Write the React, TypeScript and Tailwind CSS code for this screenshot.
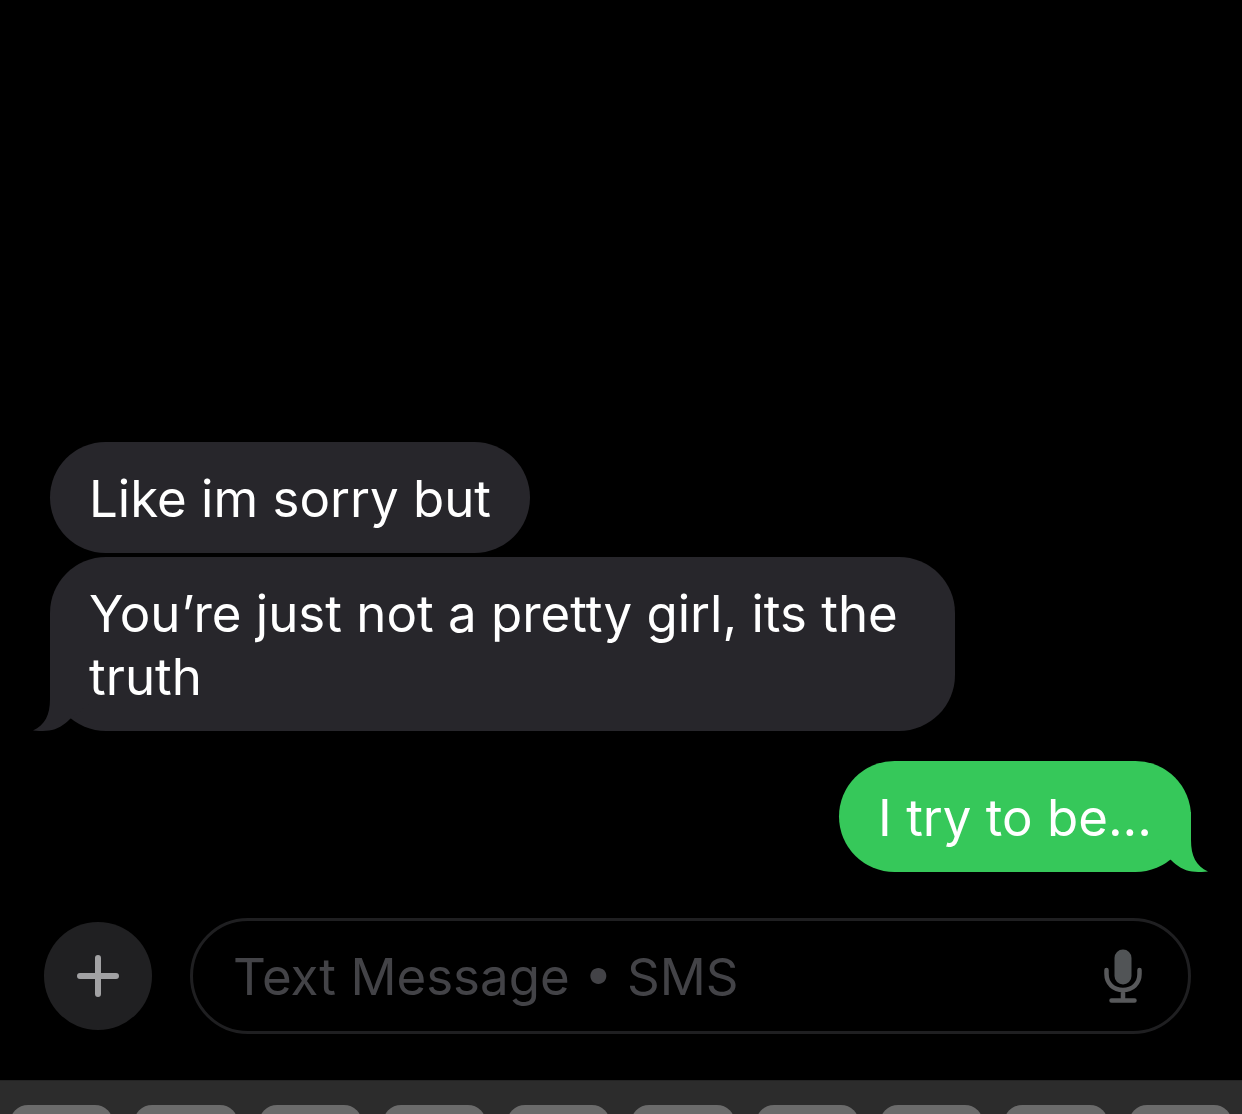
import { useState } from 'react'
import clsx from 'clsx'

interface Message {
  id: number
  text: string
  sent: boolean
  tail: boolean
}

const messages: Message[] = [
  { id: 1, text: 'Like im sorry but', sent: false, tail: false },
  { id: 2, text: 'You’re just not a pretty girl, its the truth', sent: false, tail: true },
  { id: 3, text: 'I try to be...', sent: true, tail: true },
]

const topRow = ['Q', 'W', 'E', 'R', 'T', 'Y', 'U', 'I', 'O', 'P']

function Tail({ sent }: { sent: boolean }) {
  return (
    <svg
      viewBox="0 0 60 60"
      aria-hidden="true"
      className={clsx(
        'absolute bottom-0 size-[60px]',
        sent ? '-right-[17px] -scale-x-100 fill-[#36c85a]' : '-left-[17px] fill-[#27262b]'
      )}
    >
      <path d="M17 0V28C17 44 12 54 0 59.5C5 60.2 11 60.2 16 59.5C24 58.5 31 54 37 48L60 30V0Z" />
    </svg>
  )
}

function Bubble({ message }: { message: Message }) {
  return (
    <li
      className={clsx(
        'relative max-w-[min(905px,80%)] rounded-[56px] px-[39px] pt-[25px] pb-[23px] text-white',
        message.sent ? 'mt-[26px] self-end bg-[#36c85a]' : 'self-start bg-[#27262b]'
      )}
    >
      {message.tail && <Tail sent={message.sent} />}
      <p className="relative">{message.text}</p>
    </li>
  )
}

function MicIcon() {
  return (
    <svg viewBox="0 0 38 54" aria-hidden="true" className="h-[54px] w-[38px]">
      <rect x="10.5" y="0.5" width="17" height="35" rx="8.5" fill="#515456" />
      <path
        d="M2.5 21V25C2.5 34.5 9.5 41 19 41S35.5 34.5 35.5 25V21M19 41V51M7.5 51.500H30.500"
        fill="none"
        stroke="#58595b"
        strokeWidth="4.5"
        strokeLinecap="round"
      />
    </svg>
  )
}

function Composer() {
  const [draft, setDraft] = useState('')

  return (
    <form
      className="flex items-center gap-[38px] py-[46px] pr-[51px] pl-11"
      onSubmit={(e) => e.preventDefault()}
    >
      <button
        type="button"
        aria-label="Add attachment"
        className="flex size-[108px] shrink-0 items-center justify-center rounded-full bg-[#202022]"
      >
        <svg viewBox="0 0 42 42" aria-hidden="true" className="size-[42px]">
          <path d="M21 3V39M3 21H39" stroke="#a2a2a4" strokeWidth="6" strokeLinecap="round" />
        </svg>
      </button>
      <div className="flex h-[116px] min-w-0 flex-1 items-center rounded-full border-3 border-[#1f1f21] pr-[46px] pl-10">
        <input
          type="text"
          aria-label="Text Message"
          placeholder="Text Message • SMS"
          value={draft}
          onChange={(e) => setDraft(e.target.value)}
          className="min-w-0 flex-1 bg-transparent text-white outline-none placeholder:text-[#434347]"
        />
        <button type="button" aria-label="Dictate" className="shrink-0">
          <MicIcon />
        </button>
      </div>
    </form>
  )
}

export default function App() {
  return (
    <div className="flex min-h-screen flex-col bg-black font-['Inter',sans-serif] text-[51px] leading-[63px]">
      <main className="flex flex-1 flex-col justify-end">
        <ol className="flex flex-col gap-1 pr-[51px] pl-[50px]">
          {messages.map((m) => (
            <Bubble key={m.id} message={m} />
          ))}
        </ol>
      </main>
      <Composer />
      <div className="flex h-[34px] gap-[21px] overflow-hidden border-t border-[#242424] bg-[#2c2c2c] px-[10px] pt-6">
        {topRow.map((key) => (
          <button
            key={key}
            type="button"
            aria-label={key}
            className="h-32 flex-1 rounded-[18px] bg-[#6b6b6b]"
          />
        ))}
      </div>
    </div>
  )
}
